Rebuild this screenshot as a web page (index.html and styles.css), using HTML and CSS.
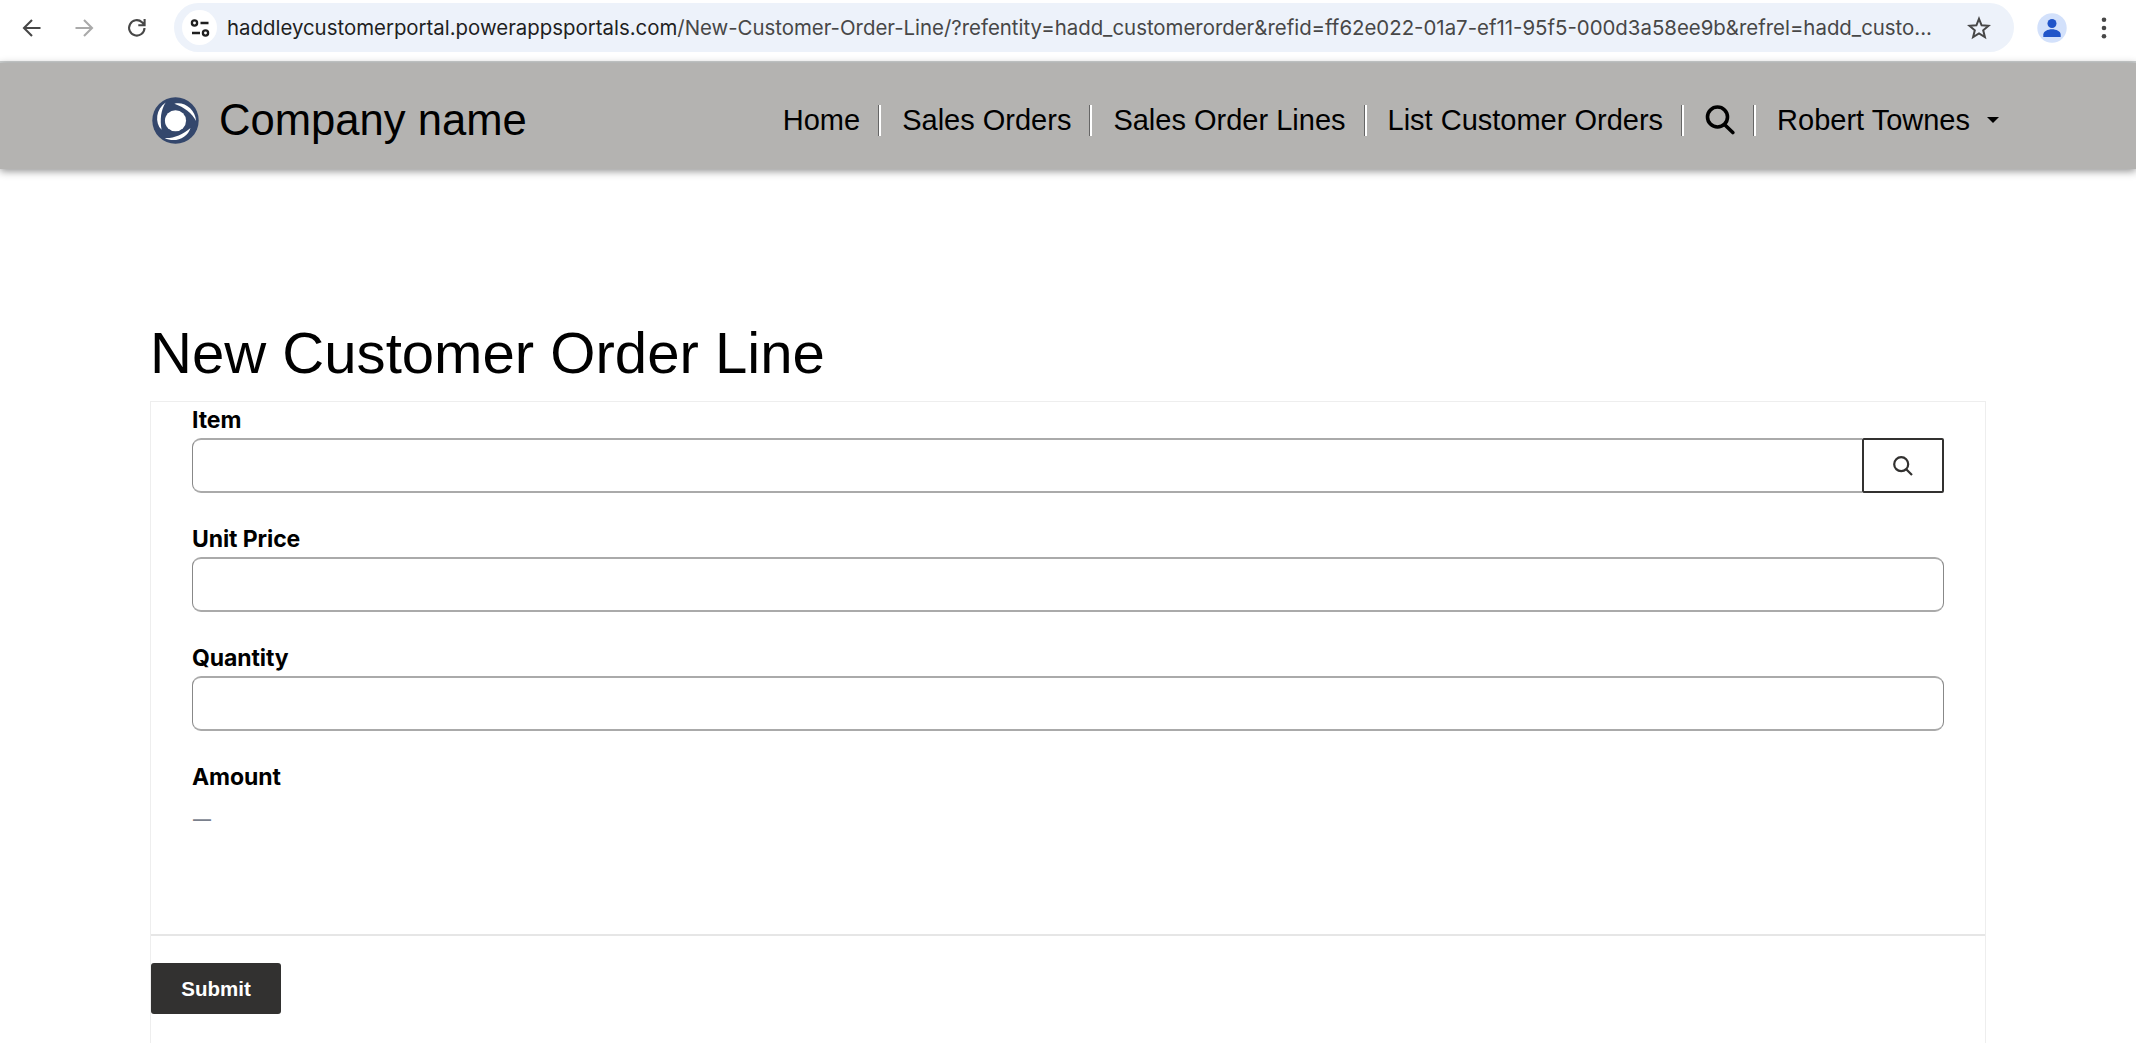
FILE: index.html
```html
<!DOCTYPE html>
<html lang="en">
<head>
<meta charset="utf-8">
<title>New Customer Order Line</title>
<link rel="stylesheet" href="styles.css">
</head>
<body>
<div class="toolbar">
  <svg class="tool back" viewBox="0 0 20 20"><path d="M18.500 10H2M10 2L2 10l8 8"/></svg>
  <svg class="tool forward" viewBox="0 0 20 20"><path d="M1.500 10H18M10 2l8 8-8 8"/></svg>
  <svg class="tool reload" viewBox="0 0 20 20"><path d="M17.500 10A7.700 7.700 0 1 1 15 4.200L17.300 6.600M17.600 1v6.300h-6.300"/></svg>
  <div class="omnibox">
    <span class="site-info"><svg width="20" height="20" viewBox="0 0 20 20"><circle cx="4.500" cy="5" r="2.600"/><path d="M10.500 5h8M2 15h8"/><circle cx="15.500" cy="15" r="2.600"/></svg></span>
    <span class="url"><span class="domain">haddleycustomerportal.powerappsportals.com</span>/New-Customer-Order-Line/?refentity=hadd_customerorder&amp;refid=ff62e022-01a7-ef11-95f5-000d3a58ee9b&amp;refrel=hadd_custo...</span>
    <svg class="star" viewBox="0 0 24 24"><path d="M12 2.800l2.600 6.500 7 .5-5.400 4.500 1.700 6.800L12 17.400l-5.900 3.700 1.700-6.800-5.400-4.500 7-.5z"/></svg>
  </div>
  <svg class="avatar" viewBox="0 0 30 30"><circle cx="15" cy="15" r="14.700" fill="#d3e1fb"/><circle cx="15" cy="10.500" r="4.500" fill="#2155c9"/><path d="M6.300 24v-2.500c0-3.200 4.500-5.300 8.700-5.300s8.700 2.100 8.700 5.300V24z" fill="#2155c9"/></svg>
  <svg class="dots" viewBox="0 0 6 22"><circle cx="3" cy="2.700" r="2.300"/><circle cx="3" cy="11" r="2.300"/><circle cx="3" cy="19.300" r="2.300"/></svg>
</div>
<header class="header">
  <svg class="logo" viewBox="0 0 48 48">
    <circle cx="24" cy="24" r="23.700" fill="#34476c"/>
    <circle cx="24" cy="24.300" r="10.800" fill="#fff"/>
    <g fill="#fff">
      <path id="blade" d="M14 5.500C4 12 2.500 26 9.800 33.500C8 23 9 13 14 5.500Z"/>
      <use href="#blade" transform="rotate(120 24 24)"/>
      <use href="#blade" transform="rotate(240 24 24)"/>
    </g>
  </svg>
  <span class="company">Company name</span>
  <nav class="nav">
    <a class="home">Home</a><i></i>
    <a class="orders">Sales Orders</a><i></i>
    <a class="lines">Sales Order Lines</a><i></i>
    <a class="list">List Customer Orders</a><i></i>
    <a class="find"><svg width="30" height="30" viewBox="0 0 30 30"><circle cx="12.500" cy="12" r="10"/><path d="M19.500 19.500l8.300 8"/></svg></a><i></i>
    <a class="user">Robert Townes<b class="caret"></b></a>
  </nav>
</header>
<main class="page">
  <h1>New Customer Order Line</h1>
  <form class="form">
    <div class="fields">
      <div class="field"><label>Item</label>
        <div class="lookup"><input type="text"><button type="button"><svg width="20" height="20" viewBox="0 0 20 20"><circle cx="8.200" cy="8.200" r="7"/><path d="M13.200 13.200l5.800 5.800"/></svg></button></div></div>
      <div class="field"><label>Unit Price</label><input type="text"></div>
      <div class="field"><label>Quantity</label><input type="text"></div>
      <div class="field"><label>Amount</label><span class="empty">—</span></div>
    </div>
    <div class="actions"><button type="button" class="submit">Submit</button></div>
  </form>
</main>
</body>
</html>
```
FILE: styles.css
```css
* { box-sizing: border-box; }
body { margin: 0; height: 1043px; overflow: hidden; background: #fff; color: #000; font-family: "Liberation Sans", sans-serif; display: flex; flex-direction: column; }
svg { display: block; flex: none; fill: none; stroke-linecap: butt; }

.toolbar { flex: none; height: 63px; padding: 3px 0 9px 22px; border-bottom: 2px solid #cfd2d2; display: flex; align-items: center; }
.tool { width: 20px; height: 20px; stroke: #474747; stroke-width: 2.1; }
.forward { margin-left: 32px; stroke: #aaa; }
.reload { margin-left: 33px; }
.omnibox { flex: none; width: 1840px; height: 49px; margin-left: 27px; padding-left: 8px; border-radius: 25px; background: #edf2fa; display: flex; align-items: center; }
.site-info { width: 35px; height: 35px; border-radius: 50%; background: #fff; display: flex; align-items: center; justify-content: center; }
.site-info svg { stroke: #1f1f1f; stroke-width: 2.3; }
.url { flex: none; width: 1706px; margin-left: 10px; font: 20.400px Inter, sans-serif; color: #474747; white-space: nowrap; }
.domain { color: #1f1f1f; }
.star { width: 24px; height: 24px; margin-left: 34px; stroke: #474747; stroke-width: 2; }
.avatar { width: 30px; height: 30px; margin-left: 23px; }
.dots { width: 6px; height: 22px; margin-left: 34px; fill: #474747; }

.header { flex: none; height: 106px; padding: 8px 137px 0 152px; background: #b4b3b1; box-shadow: 0 2px 8px rgba(0,0,0,.45); display: flex; align-items: center; }
.logo { width: 47px; height: 47px; }
.company { margin-left: 20px; font-size: 43.600px; line-height: 50px; white-space: nowrap; }
.nav { margin-left: auto; display: flex; align-items: center; font-size: 29px; line-height: 34px; white-space: nowrap; }
.nav a { padding: 0 18px 0 21px; }
.nav i { width: 3px; height: 31px; border-left: 1px solid #666; border-right: 2px solid #fff; }
.find svg { stroke: #000; stroke-width: 3.6; stroke-linecap: round; }
.nav .user { padding-right: 0; display: flex; align-items: center; }
.caret { margin-left: 17px; border: 6px solid transparent; border-top-color: #000; border-bottom: 0; }

.page { flex: 1; padding: 149px 150px 0; display: flex; flex-direction: column; }
h1 { margin: 0; height: 83px; font-size: 58.100px; font-weight: 400; line-height: 70px; white-space: nowrap; }
.form { flex: 1; border: 1px solid #eee; border-bottom: 0; }
.fields { height: 534px; padding: 0 41px; border-bottom: 2px solid #e6e6e6; }
.field { height: 119px; display: flex; flex-direction: column; }
label { height: 36px; font: 700 23px/37px Inter, sans-serif; letter-spacing: -.1px; }
input { width: 100%; height: 55px; border: 2px solid; border-width: 2px 1px; border-color: #aaa #888; border-radius: 9px; background: #fff; }
.lookup { display: flex; }
.lookup input { flex: 1; border-radius: 9px 0 0 9px; border-right: 0; }
.lookup button { width: 82px; height: 55px; padding: 0; border: 2px solid #323130; border-radius: 2px; background: #fff; display: flex; align-items: center; justify-content: center; }
.lookup svg { stroke: #323130; stroke-width: 2.2; }
.empty { padding-left: 1px; font: 500 18px/50px Inter, sans-serif; color: #7a808c; }
.actions { padding-top: 27px; }
.submit { width: 130px; height: 51px; padding: 0; border: 0; border-radius: 3px; background: #323130; color: #fff; font: bold 20.500px "Liberation Sans", sans-serif; }
```
